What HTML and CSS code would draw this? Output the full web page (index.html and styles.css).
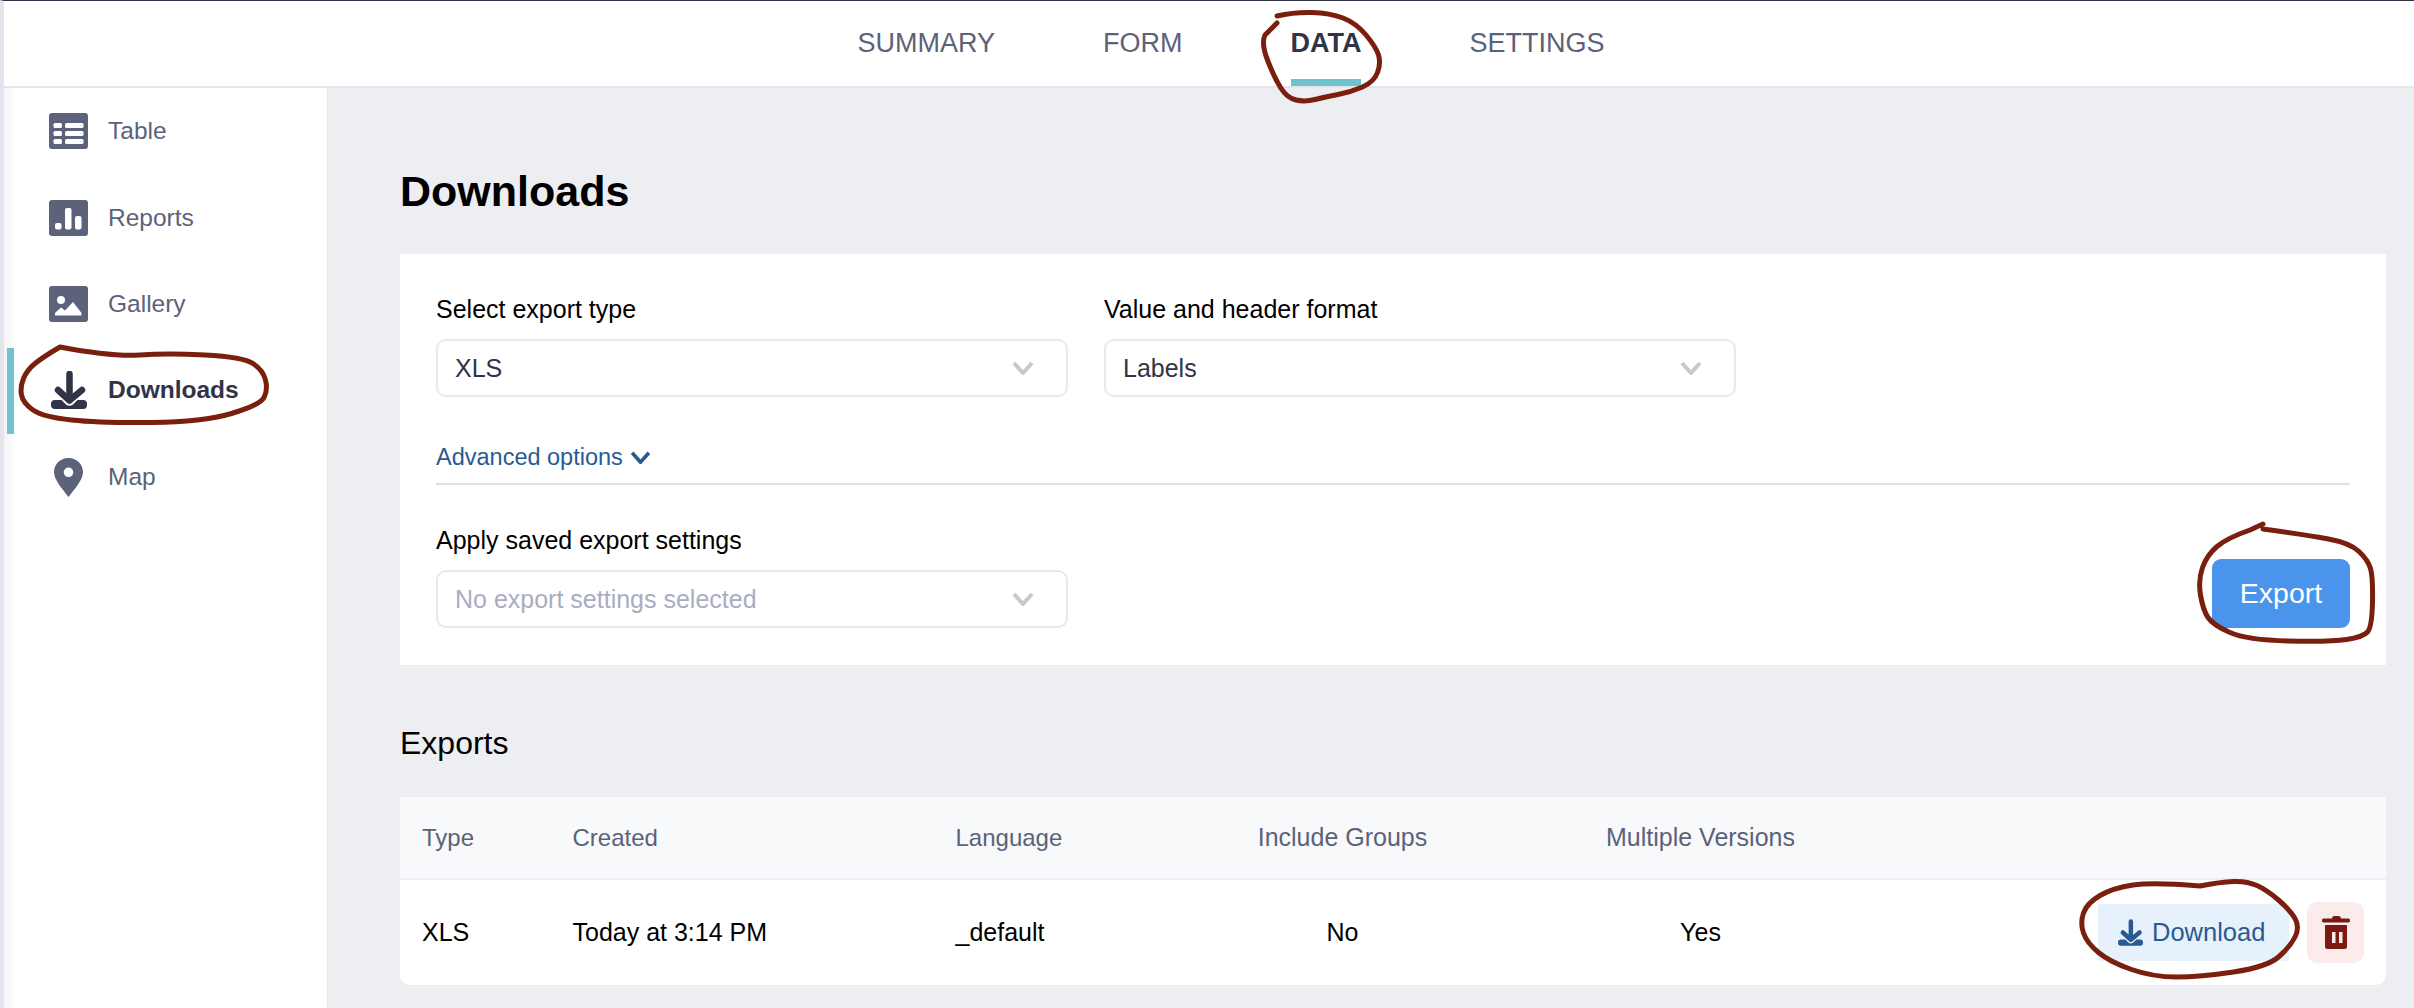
FILE: index.html
```html
<!DOCTYPE html>
<html lang="en">
<head>
<meta charset="utf-8">
<title>Downloads</title>
<link rel="stylesheet" href="styles.css">
</head>
<body>
<div class="app">
  <header class="topbar">
    <nav class="tabs">
      <a class="tab">SUMMARY</a>
      <a class="tab">FORM</a>
      <a class="tab tab-active">DATA</a>
      <a class="tab">SETTINGS</a>
    </nav>
  </header>
  <div class="body">
    <aside class="sidebar">
      <a class="side-item">
        <svg class="side-icon" viewBox="0 0 39 36"><rect width="39" height="36" rx="3"/><g class="knock"><rect x="4.500" y="10" width="8.500" height="5" rx="1.500"/><rect x="16" y="10" width="18.500" height="5" rx="1.500"/><rect x="4.500" y="18" width="8.500" height="5" rx="1.500"/><rect x="16" y="18" width="18.500" height="5" rx="1.500"/><rect x="4.500" y="26" width="8.500" height="5" rx="1.500"/><rect x="16" y="26" width="18.500" height="5" rx="1.500"/></g></svg>
        <span>Table</span>
      </a>
      <a class="side-item">
        <svg class="side-icon" viewBox="0 0 39 36"><rect width="39" height="36" rx="3"/><g class="knock"><rect x="6" y="23" width="6.500" height="6.500" rx="2"/><rect x="16" y="8" width="6.500" height="21.500" rx="2"/><rect x="26" y="16" width="6.500" height="13.500" rx="2"/></g></svg>
        <span>Reports</span>
      </a>
      <a class="side-item">
        <svg class="side-icon" viewBox="0 0 39 36"><rect width="39" height="36" rx="3"/><g class="knock"><circle cx="12" cy="14" r="4"/><path d="M6 29.500 L6 27 L12 21.500 L16 24.500 L24 16 L32.500 27 L32.500 29.500 Z"/></g></svg>
        <span>Gallery</span>
      </a>
      <a class="side-item side-active">
        <svg class="side-icon dl-side" viewBox="0 0 36 38"><path class="arrow" d="M18.500 3 V27 M7 19 L18.500 29.500 L31 19"/><path d="M4 29 H10.500 L15 33.500 Q18.500 36 22 33.500 L26.500 29 H32 Q36 29 36 33 V34 Q36 38 32 38 H4 Q0 38 0 34 V33 Q0 29 4 29 Z"/></svg>
        <span>Downloads</span>
      </a>
      <a class="side-item">
        <svg class="side-icon side-pin" viewBox="0 0 30 39"><path fill-rule="evenodd" d="M15 0 C23.500 0 29.500 6.500 29.500 14 C29.500 22 21 31 15 39 C9 31 .5 22 .5 14 C.5 6.500 6.500 0 15 0 Z M15 9.500 A4.800 4.800 0 1 0 15 19.100 A4.800 4.800 0 1 0 15 9.500 Z"/></svg>
        <span>Map</span>
      </a>
    </aside>
    <main class="content">
      <h1 class="page-title">Downloads</h1>
      <section class="panel">
        <div class="field-row">
          <div class="field">
            <label class="field-label">Select export type</label>
            <div class="select"><span>XLS</span><svg class="chev" viewBox="0 0 22 14"><path d="M2 2 L11 12 L20 2"/></svg></div>
          </div>
          <div class="field">
            <label class="field-label">Value and header format</label>
            <div class="select"><span>Labels</span><svg class="chev" viewBox="0 0 22 14"><path d="M2 2 L11 12 L20 2"/></svg></div>
          </div>
        </div>
        <div class="advanced">
          <a class="advanced-link">Advanced options</a>
          <svg class="adv-chev" viewBox="0 0 22 14"><path d="M2 2 L11 12 L20 2"/></svg>
        </div>
        <div class="saved-row">
          <div class="field">
            <label class="field-label">Apply saved export settings</label>
            <div class="select select-empty"><span>No export settings selected</span><svg class="chev" viewBox="0 0 22 14"><path d="M2 2 L11 12 L20 2"/></svg></div>
          </div>
          <button class="export-btn">Export</button>
        </div>
      </section>
      <h2 class="section-title">Exports</h2>
      <section class="table">
        <div class="grid-row table-head">
          <span class="head-small">Type</span>
          <span class="head-small">Created</span>
          <span class="head-small">Language</span>
          <span class="center">Include Groups</span>
          <span class="center">Multiple Versions</span>
          <span></span>
        </div>
        <div class="grid-row table-line">
          <span>XLS</span>
          <span>Today at 3:14 PM</span>
          <span>_default</span>
          <span class="center">No</span>
          <span class="center">Yes</span>
          <div class="actions">
            <button class="download-btn">
              <svg class="dl-icon" viewBox="0 0 36 38"><path class="arrow" d="M18.500 3 V27 M7 19 L18.500 29.500 L31 19"/><path d="M4 29 H10.500 L15 33.500 Q18.500 36 22 33.500 L26.500 29 H32 Q36 29 36 33 V34 Q36 38 32 38 H4 Q0 38 0 34 V33 Q0 29 4 29 Z"/></svg>
              <span>Download</span>
            </button>
            <button class="delete-btn">
              <svg class="trash" viewBox="0 0 28 33"><path d="M10 2.500 Q10 0 12 0 H17 Q19 0 19 2.500 H26.500 Q28 2.500 28 4.500 Q28 6.500 26.500 6.500 H1.500 Q0 6.500 0 4.500 Q0 2.500 1.500 2.500 Z"/><path fill-rule="evenodd" d="M3 9 H25 V30.500 Q25 33 22.500 33 H5.500 Q3 33 3 30.500 Z M10 16 V27 H13.500 V16 Z M17 16 V27 H20.500 V16 Z"/></svg>
            </button>
          </div>
        </div>
      </section>
    </main>
  </div>
</div>
<svg class="scribbles" viewBox="0 0 2414 1008" aria-hidden="true">
  <path d="M1277 16 Q1294 12 1312 12.500 Q1330 13 1343 18 Q1356 23 1366 35 Q1376 47 1378.500 55 Q1381 63 1377.500 72.500 Q1374 82 1362.500 87 Q1351 92 1338 94.500 Q1325 97 1315 99.500 Q1305 102 1296 100 Q1287 98 1280.500 87.500 Q1274 77 1267.500 60 Q1261 43 1265 35 L1277 23"/>
  <path d="M60 347 Q113 357 140 355 Q167 353 205 355 Q243 357 253 363.500 Q263 370 265.500 380 Q268 390 264 397.500 Q260 405 231.500 413.500 Q203 422 151.500 422.500 Q100 423 71.500 420 Q43 417 33 410 Q23 403 21.500 395 Q20 387 23.500 378.500 Q27 370 35 363.500 Q43 357 60 347"/>
  <path d="M2263 524 L2250 530 Q2227 538 2217 546.500 Q2207 555 2202.500 567.500 Q2198 580 2200.500 595 Q2203 610 2208 617.500 Q2213 625 2230 632.500 Q2247 640 2288.500 641 Q2330 642 2346.500 639.500 Q2363 637 2367.500 632 Q2372 627 2372.500 602 Q2373 577 2370.500 568.500 Q2368 560 2359 551.500 Q2350 543 2328.500 539 Q2307 535 2263 529"/>
  <path d="M2200 886 Q2153 882 2133 885 Q2113 888 2100 895.500 Q2087 903 2083.500 913 Q2080 923 2083.500 933 Q2087 943 2098.500 952.500 Q2110 962 2131.500 969.500 Q2153 977 2176.500 977 Q2200 977 2233.500 972 Q2267 967 2278.500 957 Q2290 947 2295 937 Q2300 927 2295 918.500 Q2290 910 2278.500 900 Q2267 890 2257 885.500 Q2247 881 2233.500 881.500 Q2220 882 2200 886"/>
</svg>
</body>
</html>
```

FILE: styles.css
```css
* { box-sizing: border-box; }
html, body { margin: 0; height: 100%; }
body {
  position: relative;
  overflow: hidden;
  background: #eceef2;
  color: #000;
  font-family: "Liberation Sans", Arial, sans-serif;
  font-size: 25px;
}
.app {
  height: 1008px;
  display: flex;
  flex-direction: column;
  border-top: 1px solid #2f3447;
  border-left: 4px solid #e4e5ec;
}
.topbar {
  flex: none;
  height: 87px;
  background: #fff;
  border-bottom: 2px solid #e4e6ea;
  display: flex;
  justify-content: center;
}
.tabs {
  display: flex;
  gap: 108px;
  padding-left: 44px;
}
.tab {
  position: relative;
  height: 85px;
  display: flex;
  align-items: center;
  font-size: 27px;
  color: #5c6279;
}
.tab-active {
  font-weight: bold;
  color: #2f3447;
}
.tab-active::after {
  content: "";
  position: absolute;
  left: 0;
  right: 0;
  bottom: 0;
  height: 7px;
  background: #6fc3cd;
}
.body {
  flex: 1;
  display: flex;
  min-height: 0;
}
.sidebar {
  flex: none;
  width: 324px;
  background: linear-gradient(90deg, #f4f4f7 0, #fff 12px);
  border-right: 1px solid #e4e6ea;
}
.side-item {
  position: relative;
  height: 86.500px;
  display: flex;
  align-items: center;
  padding-left: 45px;
  gap: 20px;
  color: #5c6279;
  font-size: 24.500px;
}
.side-icon {
  width: 39px;
  height: 36px;
  fill: currentColor;
  flex: none;
}
.knock { fill: #fff; }
.dl-side {
  height: 38px;
  width: 36px;
  margin: 0 1.500px;
}
.side-pin { height: 39px; }
.arrow {
  fill: none;
  stroke: currentColor;
  stroke-width: 6.500;
  stroke-linecap: round;
  stroke-linejoin: round;
}
.side-active {
  font-weight: bold;
  color: #2f3447;
  padding-bottom: 1px;
}
.side-active::before {
  content: "";
  position: absolute;
  left: 3px;
  top: 0;
  bottom: 0;
  width: 7px;
  background: #6fc3cd;
}
.content {
  flex: 1;
  min-width: 0;
  padding: 0 28px 0 72px;
}
.page-title {
  margin: 0;
  height: 166px;
  display: flex;
  align-items: center;
  padding-top: 40px;
  font-size: 43px;
  font-weight: bold;
}
.panel {
  background: #fff;
  height: 411px;
  padding: 0 36px;
}
.field-row {
  display: flex;
  gap: 36px;
  padding-top: 33px;
}
.field { width: 632px; }
.field-label {
  display: block;
  height: 52px;
  line-height: 44px;
}
.select {
  height: 58px;
  border: 2px solid #e8e9ee;
  border-radius: 10px;
  padding: 0 32px 0 17px;
  display: flex;
  align-items: center;
  justify-content: space-between;
  color: #2f3447;
  background: #fff;
}
.select-empty { color: #a9adc0; }
.chev {
  width: 22px;
  height: 14px;
  fill: none;
  stroke: #c9c9cc;
  stroke-width: 4;
}
.advanced {
  margin-top: 36px;
  height: 52px;
  border-bottom: 2px solid #dfe0e6;
  display: flex;
  align-items: flex-start;
  gap: 7px;
  color: #2a5a92;
  font-size: 23.500px;
  line-height: 48px;
}
.adv-chev {
  width: 21px;
  height: 13px;
  margin-top: 18px;
  fill: none;
  stroke: #2a5a92;
  stroke-width: 4;
}
.saved-row {
  display: flex;
  justify-content: space-between;
  align-items: flex-end;
  padding-top: 33px;
}
.export-btn {
  width: 138px;
  height: 69px;
  border: 0;
  border-radius: 9px;
  background: #4a94ec;
  color: #fff;
  font: 28.500px "Liberation Sans", Arial, sans-serif;
}
.section-title {
  margin: 0;
  height: 132px;
  display: flex;
  align-items: center;
  padding-top: 25px;
  font-size: 32px;
  font-weight: normal;
}
.table {
  background: #fff;
  border-radius: 0 0 10px 10px;
  overflow: hidden;
}
.grid-row {
  display: grid;
  grid-template-columns: 150.500px 383px 262px 250px 466px 1fr;
  align-items: center;
  padding-left: 22px;
}
.center { text-align: center; }
.table-head {
  height: 83px;
  background: #f8f9fb;
  border-bottom: 2px solid #eceef2;
  color: #5c6279;
}
.head-small { font-size: 24px; }
.table-line { height: 105px; }
.actions {
  display: flex;
  justify-content: flex-end;
  align-items: center;
  gap: 18px;
  padding-right: 22px;
}
.download-btn {
  width: 191px;
  height: 57px;
  border: 0;
  border-radius: 4px;
  padding: 0 0 0 20px;
  background: #e6f1fb;
  color: #2a5a92;
  display: flex;
  align-items: center;
  gap: 9px;
  font: 25.500px "Liberation Sans", Arial, sans-serif;
}
.dl-icon {
  width: 25px;
  height: 27px;
  fill: currentColor;
  flex: none;
}
.delete-btn {
  width: 57px;
  height: 61px;
  border: 0;
  border-radius: 10px;
  background: #fcebeb;
  display: flex;
  align-items: center;
  justify-content: center;
  padding: 0;
}
.trash {
  width: 28px;
  height: 33px;
  fill: #7b1a0e;
}
.scribbles {
  position: absolute;
  left: 0;
  top: 0;
  width: 2414px;
  height: 1008px;
  pointer-events: none;
}
.scribbles path {
  fill: none;
  stroke: #7a1f0e;
  stroke-width: 5;
  stroke-linecap: round;
  stroke-linejoin: round;
}
```
